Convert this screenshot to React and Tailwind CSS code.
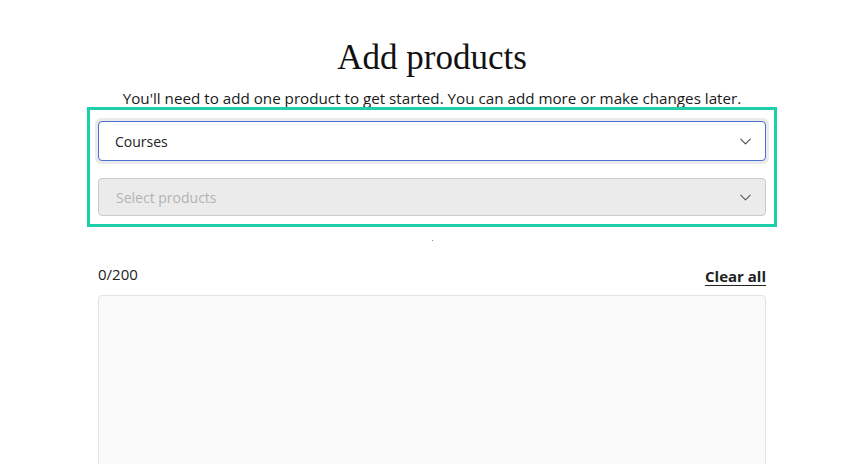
import { ChevronDown } from 'lucide-react';

const sans = { fontFamily: '"Open Sans", "Noto Sans", sans-serif' };

function SelectBox({ label, value, disabled }) {
  if (disabled) {
    return (
      <div className="flex h-[38px] items-center justify-between rounded-[4px] border border-[#cccccc] bg-[#ebebeb] pl-[17px] pr-[10px]">
        <span className="text-[14px] text-[#b3b3b3]">{label}</span>
        <ChevronDown className="h-[19px] w-[19px] text-[#555555]" strokeWidth={1.3} />
      </div>
    );
  }

  return (
    <div className="rounded-[6px] bg-[#ebebeb] p-[3px]">
      <div className="flex h-[40px] items-center justify-between rounded-[4px] border border-[#4a6fd6] bg-white pl-[16px] pr-[10px]">
        <span className="text-[14px] text-[#222222]">{value}</span>
        <ChevronDown className="h-[19px] w-[19px] text-[#444444]" strokeWidth={1.3} />
      </div>
    </div>
  );
}

export default function App() {
  return (
    <div className="flex min-h-screen flex-col items-center bg-white pl-[6px] text-[#222222]" style={sans}>
      <h1
        className="mt-[36px] text-[35px] leading-[44px] text-[#111111]"
        style={{ fontFamily: '"Liberation Serif", serif' }}
      >
        Add products
      </h1>
      <p className="mt-[8px] text-[15.2px] leading-[20px] text-[#1a1a1a]">
        You'll need to add one product to get started. You can add more or make changes later.
      </p>

      <div className="mt-[-1px] w-[690px] border-[3px] border-[#1ecfa9] px-[5px] pb-[8px] pt-[8px]">
        <SelectBox value="Courses" />
        <div className="mx-[3px] mt-[14px]">
          <SelectBox label="Select products" disabled />
        </div>
      </div>

      <div className="mt-[13px] h-[1px] w-[1px] bg-[#888888]" />

      <div className="mt-[23px] w-[668px]">
        <div className="flex items-end justify-between">
          <span className="pb-[2px] text-[15px] leading-[20px]">0/200</span>
          <button className="text-[15px] font-bold leading-[20px] text-[#222222] underline underline-offset-[3px]">
            Clear all
          </button>
        </div>
        <div className="mt-[9px] h-[200px] rounded-[4px] border border-[#e3e3e3] bg-[#fafafa]" />
      </div>
    </div>
  );
}
